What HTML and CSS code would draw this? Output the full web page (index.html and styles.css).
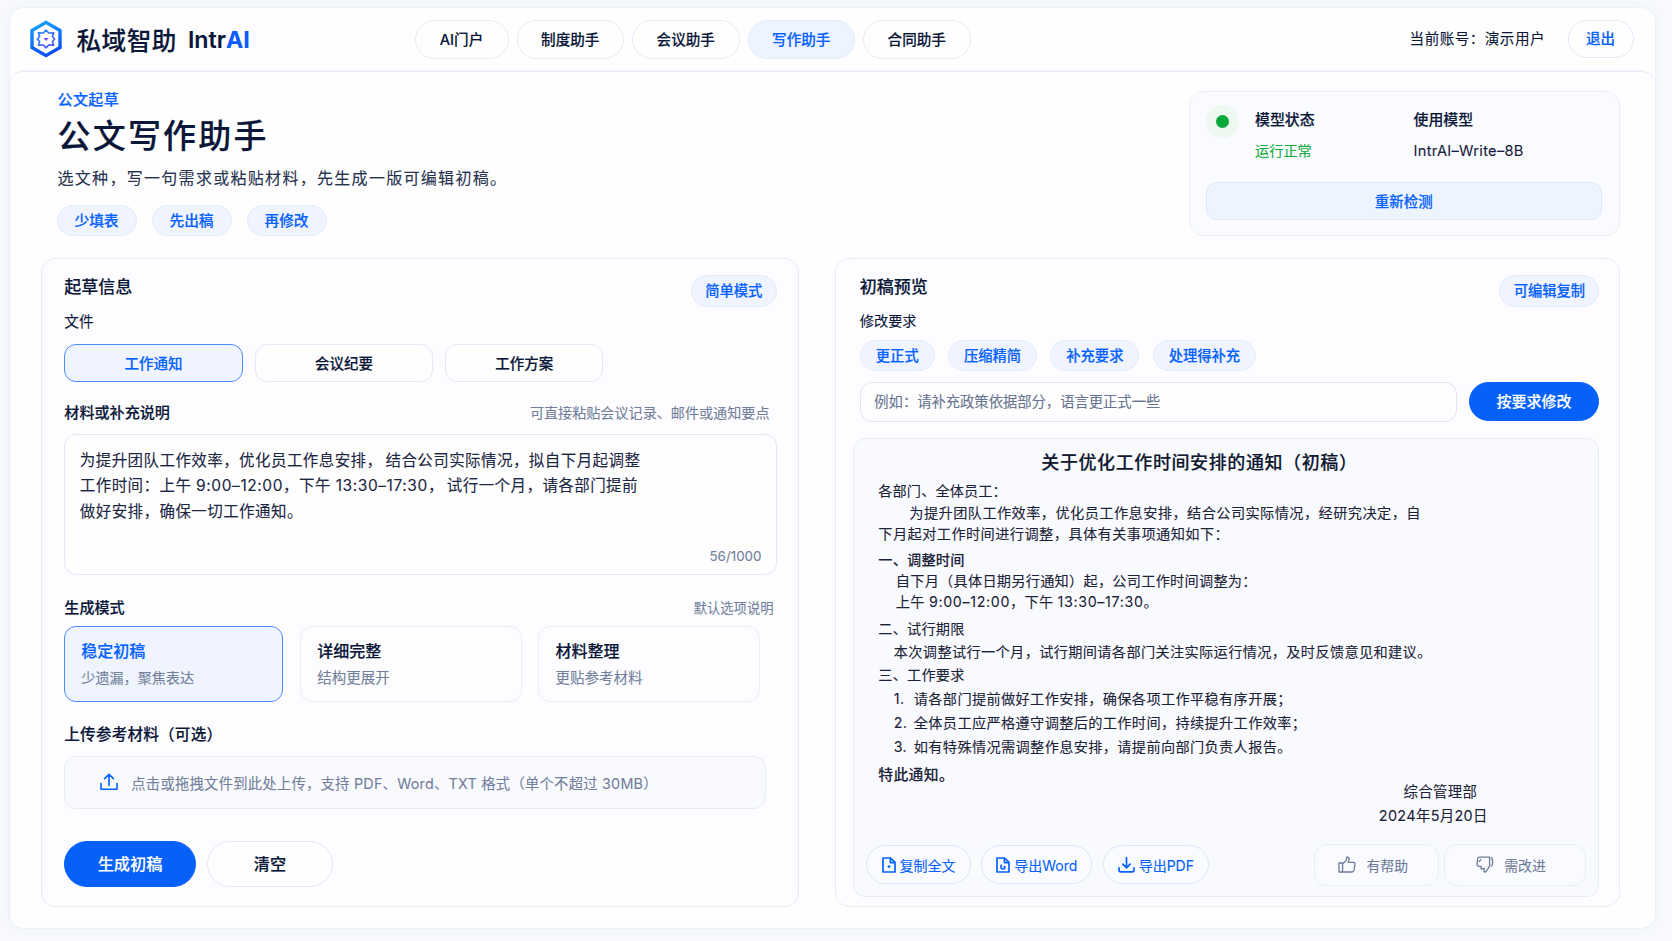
FILE: index.html
```html
<!DOCTYPE html>
<html lang="zh-CN">
<head>
<meta charset="utf-8">
<title>公文写作助手 - 私域智助 IntrAI</title>
<link rel="stylesheet" href="styles.css">
</head>
<body>
<div class="frame">
  <header class="topbar">
    <div class="brand">
      <svg class="brand-logo" viewBox="0 0 34 38">
        <defs>
          <linearGradient id="hex" x1="0" y1="0" x2="0.3" y2="1"><stop offset="0" stop-color="#12a5ff"/><stop offset="1" stop-color="#0a50f5"/></linearGradient>
          <linearGradient id="star" x1="0" y1="0" x2="1" y2="1"><stop offset="0" stop-color="#1f8bff"/><stop offset="1" stop-color="#5a4df0"/></linearGradient>
        </defs>
        <path d="M17 2.4 31 10.5V27.5L17 35.6 3 27.5V10.5Z" fill="#fff" stroke="url(#hex)" stroke-width="3.4"/>
        <path d="M17 10.2 19.7 13 24.6 12.8 23.4 16.5 25.6 19 23.4 21.5 24.6 25.2 19.7 25 17 27.8 14.3 25 9.4 25.2 10.6 21.5 8.4 19 10.6 16.5 9.4 12.8 14.3 13Z" fill="none" stroke="url(#star)" stroke-width="1.7" stroke-linejoin="round"/>
        <path d="M14.4 18h5.2L17 21Z" fill="#7a4df2" stroke="none"/>
      </svg>
      <span class="brand-cn">私域智助</span>
      <span class="brand-en">Intr<b>AI</b></span>
    </div>
    <nav class="nav">
      <a class="nav-item nav-first">AI门户</a>
      <a class="nav-item">制度助手</a>
      <a class="nav-item">会议助手</a>
      <a class="nav-item active">写作助手</a>
      <a class="nav-item">合同助手</a>
    </nav>
    <div class="account">
      <span class="account-name">当前账号：演示用户</span>
      <button class="logout">退出</button>
    </div>
  </header>

  <main class="page">
    <section class="hero">
      <div class="intro">
        <div class="eyebrow">公文起草</div>
        <h1>公文写作助手</h1>
        <p class="lead">选文种，写一句需求或粘贴材料，先生成一版可编辑初稿。</p>
        <div class="intro-chips"><span class="chip">少填表</span><span class="chip">先出稿</span><span class="chip">再修改</span></div>
      </div>
      <aside class="status">
        <div class="status-row">
          <span class="halo"><i></i></span>
          <div class="status-col"><strong>模型状态</strong><span class="ok">运行正常</span></div>
          <div class="status-col"><strong>使用模型</strong><span class="model">IntrAI–Write–8B</span></div>
        </div>
        <button class="recheck">重新检测</button>
      </aside>
    </section>

    <section class="panels">
      <div class="panel draft">
        <div class="panel-head"><h2>起草信息</h2><span class="chip tag">简单模式</span></div>
        <div class="label label-file">文件</div>
        <div class="types">
          <button class="type on">工作通知</button>
          <button class="type">会议纪要</button>
          <button class="type narrow">工作方案</button>
        </div>
        <div class="label-row material-row"><span class="label strong">材料或补充说明</span><span class="hint">可直接粘贴会议记录、邮件或通知要点</span></div>
        <div class="textarea">
          <p>为提升团队工作效率，优化员工作息安排，<span class="thin"></span>结合公司实际情况，拟自下月起调整<br>工作时间：上午 <span class="time">9:00–12:00</span>，下午 <span class="time">13:30–17:30</span>，<span class="thin"></span>试行一个月，请各部门提前<br>做好安排，确保一切工作通知。</p>
          <span class="counter">56/1000</span>
        </div>
        <div class="label-row mode-row"><span class="label strong">生成模式</span><span class="hint small">默认选项说明</span></div>
        <div class="modes">
          <div class="mode on"><strong>稳定初稿</strong><span class="tight">少遗漏，聚焦表达</span></div>
          <div class="mode"><strong>详细完整</strong><span>结构更展开</span></div>
          <div class="mode"><strong>材料整理</strong><span>更贴参考材料</span></div>
        </div>
        <div class="label label-upload">上传参考材料（可选）</div>
        <div class="upload">
          <svg class="upload-icon" viewBox="0 0 18 18"><path d="M1 10.5V16.2H17V10.5M9 12.5V1.5M4.6 5.6 9 1.3 13.4 5.6"/></svg>
          <span>点击或拖拽文件到此处上传，支持 PDF、Word、TXT 格式（单个不超过 30MB）</span>
        </div>
        <div class="actions"><button class="primary generate">生成初稿</button><button class="clear">清空</button></div>
      </div>

      <div class="panel preview">
        <div class="panel-head"><h2>初稿预览</h2><span class="chip tag">可编辑复制</span></div>
        <div class="label label-revise">修改要求</div>
        <div class="revise-chips"><span class="chip">更正式</span><span class="chip">压缩精简</span><span class="chip">补充要求</span><span class="chip">处理得补充</span></div>
        <div class="revise-row">
          <div class="input">例如：请补充政策依据部分，语言更正式一些</div>
          <button class="primary revise">按要求修改</button>
        </div>
        <article class="doc">
          <h3>关于优化工作时间安排的通知（初稿）</h3>
          <p class="salute">各部门、全体员工：</p>
          <p class="para">为提升团队工作效率，优化员工作息安排，结合公司实际情况，经研究决定，自<br>下月起对工作时间进行调整，具体有关事项通知如下：</p>
          <h4>一、调整时间</h4>
          <p class="times">自下月（具体日期另行通知）起，公司工作时间调整为：<br>上午 <span class="time">9:00–12:00</span>，下午 <span class="time">13:30–17:30</span>。</p>
          <h4 class="light">二、试行期限</h4>
          <p class="trial">本次调整试行一个月，试行期间请各部门关注实际运行情况，及时反馈意见和建议。</p>
          <h4 class="light third">三、工作要求</h4>
          <ol class="reqs">
            <li><i>1.</i>请各部门提前做好工作安排，确保各项工作平稳有序开展；</li>
            <li><i>2.</i>全体员工应严格遵守调整后的工作时间，持续提升工作效率；</li>
            <li><i>3.</i>如有特殊情况需调整作息安排，请提前向部门负责人报告。</li>
          </ol>
          <div class="closing">
            <p class="end">特此通知。</p>
            <div class="sign"><span class="dept">综合管理部</span><span>2024年5月20日</span></div>
          </div>
          <footer class="doc-foot">
            <button class="export copy"><svg viewBox="0 0 14 16"><path d="M1 1H8.6L13 5.4V15H1ZM8.4 1.2V5.6H12.8"/><circle cx="7" cy="9.6" r="1.4"/></svg>复制全文</button>
            <button class="export word"><svg viewBox="0 0 14 16"><path d="M1 1H8.6L13 5.4V15H1ZM8.4 1.2V5.6H12.8M5.4 8.2C4 10.5 5.6 12 7.2 12S9.6 10 8.2 9.6"/></svg>导出Word</button>
            <button class="export pdf"><svg class="wide" viewBox="0 0 17 16"><path d="M8.5 .8V10.6M4.9 7.2 8.5 10.8 12.1 7.2M1 10.8V13Q1 14.8 2.8 14.8H14.2Q16 14.8 16 13V10.8"/></svg>导出PDF</button>
            <button class="vote up"><svg viewBox="0 0 18 17"><path d="M1 7H4.6V16H1ZM4.6 8 8.2 4.4 8.7 1.6Q9.2 .6 10.3 1.2 11.5 2 11 3.8L10.3 6.4H15.6Q17.2 6.6 17 8.2L15.9 14.4Q15.5 16 14 16H4.6"/></svg>有帮助</button>
            <button class="vote down"><svg viewBox="0 0 18 17"><path d="M13.6 1.2H3.2Q1.9 1.2 1.7 2.6L1 8.6Q1 10.2 2.6 10.3H5.2V13.2M13.6 1.2V10.4L9.6 15.8Q8.2 16.4 7.9 15L8.2 12.4 5.2 12.8M3.2 5.5 5 3.6M15.6 1.6Q17.6 5.6 15.8 10.2"/></svg>需改进</button>
          </footer>
        </article>
      </div>
    </section>
  </main>
</div>
</body>
</html>
```
FILE: styles.css
```css
* { box-sizing: border-box; }
body {
  margin: 0;
  width: 1672px;
  height: 941px;
  overflow: hidden;
  padding: 7px 16px 12px 9px;
  background: #f7f9fd;
  color: #0b1738;
  font-family: Inter, "Noto Sans CJK SC", sans-serif;
  font-size: 14.5px;
  text-spacing-trim: space-all;
  -webkit-text-stroke: .1px currentColor;
}
h1, h2, h3, h4, p, ol { margin: 0; padding: 0; font-weight: 500; }
button { font: inherit; color: inherit; padding: 0; margin: 0; background: #fefeff; border: 1px solid #e3e9f7; }
svg { fill: none; stroke: currentColor; stroke-linejoin: round; stroke-linecap: round; flex: none; }
strong, b { font-weight: 500; }
h1, h2, h3, strong, .brand-cn, .nav-item, .chip, .type, .logout, .primary, .clear, .recheck, .eyebrow, .label.strong, .label-upload {
  -webkit-text-stroke: .16px currentColor;
}

.frame {
  height: 922px;
  border: 1px solid #edf1f9;
  border-radius: 14px;
  background: #fefeff;
  box-shadow: 0 0 8px rgba(60, 90, 170, .04);
}

/* top bar */
.topbar { height: 63px; display: flex; align-items: center; position: relative; padding-left: 19px; }
.brand { display: flex; align-items: center; width: 386px; padding-bottom: 1px; }
.brand-logo { width: 34px; height: 38px; stroke-linejoin: miter; }
.brand-cn { margin-left: 13.5px; padding-bottom: 1px; font-size: 24.6px; letter-spacing: .5px; font-weight: 500; }
.brand-en { margin-left: 11px; padding-top: 1px; font-size: 23.2px; font-weight: 600; }
.brand-en b { color: #0a5cff; font-weight: 700; }
.nav { display: flex; gap: 8px; margin-left: -.5px; }
.nav-item {
  width: 107.5px; height: 39px; line-height: 38px; text-align: center;
  border: 1px solid #e6ebf7; border-radius: 20px; font-weight: 500; font-size: 14.6px;
}
.nav-first { width: 94px; }
.nav-item.active { color: #0561ff; background: #edf3ff; border-color: #e2ebfd; }
.account { margin-left: auto; display: flex; align-items: center; padding: 0 21.5px 1.5px 0; }
.account-name { font-size: 14.6px; letter-spacing: .45px; padding-bottom: 2px; }
.logout { width: 66px; height: 38px; border-radius: 19px; margin-left: 22.5px; padding-bottom: 2px; color: #0561ff; font-weight: 500; }

/* page */
.page {
  height: 857px;
  border-top: 1px solid #e6ebf6;
  border-radius: 14px;
  box-shadow: 0 -1px 3px rgba(60, 90, 170, .05);
  padding: 18.5px 35px 0 31px;
}
.hero { display: flex; justify-content: space-between; height: 167px; }
.intro { padding-left: 16.5px; }
.eyebrow { line-height: 18px; color: #0561ff; font-size: 15px; letter-spacing: .4px; font-weight: 500; }
h1 { font-size: 33px; letter-spacing: 2.2px; line-height: 44px; margin-top: 5px; }
.lead { font-size: 16px; letter-spacing: 1.3px; line-height: 22px; margin-top: 9.5px; color: #27324f; font-weight: 400; }
.intro-chips { display: flex; gap: 15px; margin: 15.5px 0 0 -.5px; }
.chip {
  display: block; height: 31px; line-height: 29px; padding: 0 16.5px; border-radius: 16px;
  background: #eff4fe; border: 1px solid #e3ebfc; color: #0561ff; font-weight: 500; font-size: 14.3px;
}
.intro-chips .chip { width: 80px; padding: 0 1px 0 0; text-align: center; font-size: 14.7px; line-height: 30px; }

.status { width: 431.5px; height: 145px; border: 1px solid #e9eef8; border-radius: 14px; background: #fafbfe; padding: 13px 17px 0 16px; }
.status-row { display: flex; height: 77.5px; }
.halo { width: 33px; height: 33px; border-radius: 50%; background: #edf8f1; display: grid; place-items: center; }
.halo i { width: 13px; height: 13px; border-radius: 50%; background: #08a83a; }
.status-col { display: flex; flex-direction: column; gap: 11px; line-height: 20px; padding-top: 5px; width: 158.5px; margin-left: 16.5px; }
.status-col + .status-col { margin-left: 0; }
.status-col strong { font-size: 14.9px; }
.ok { color: #0cab3c; font-size: 14.2px; }
.model { color: #16203d; font-size: 14.6px; letter-spacing: .3px; white-space: nowrap; }
.recheck { width: 396.5px; height: 38px; padding-bottom: 2px; border-radius: 11px; background: #eef4fe; border-color: #dbe7fd; color: #0561ff; font-weight: 500; }

.panels { display: flex; gap: 36.8px; }
.panel { border: 1px solid #e6ebf6; border-radius: 14px; background: #fdfdff; height: 649px; flex: none; }
.draft { width: 757.5px; padding: 16px 21px 0 22.3px; }
.preview { width: 785px; padding: 16px 20px 0 23.5px; }
.panel-head { display: flex; justify-content: space-between; height: 32px; }
h2 { font-size: 17px; line-height: 24px; }
.tag { height: 32px; line-height: 30px; padding: 0 13.2px; }

.label { line-height: 20px; font-size: 14.7px; font-weight: 500; }
.label.strong { font-size: 15.1px; }
.label-file { margin-top: 5px; font-weight: 400; }
.types { display: flex; gap: 12.2px; margin-top: 12px; }
.type { width: 178.3px; height: 38.5px; border-radius: 12px; font-weight: 500; }
.type.narrow { width: 158px; }
.on { background: #eff4fe; border-color: #4a8dfb; color: #0561ff; }
.label-row { display: flex; justify-content: space-between; line-height: 20px; }
.material-row { margin-top: 21px; padding-right: 7px; }
.mode-row { margin-top: 22.5px; padding-right: 3px; }
.hint { color: #727f9c; font-size: 14.1px; }
.hint.small { font-size: 13.3px; }
.textarea {
  margin-top: 10.5px; height: 141.5px; border: 1px solid #e2e8f5; border-radius: 12px; background: #fefeff;
  padding: 13px 14px 8px 14.5px; display: flex; flex-direction: column; justify-content: space-between;
}
.textarea p { font-size: 15.5px; letter-spacing: .43px; line-height: 25.6px; color: #1b2642; font-weight: 400; white-space: nowrap; }
.textarea .time { letter-spacing: .58px; }
.thin { display: inline-block; width: 3px; }
.counter { align-self: flex-end; color: #727f9c; line-height: 20px; font-size: 13.4px; }
.modes { display: flex; gap: 16px; margin-top: 8.5px; }
.mode { width: 222.3px; height: 75.5px; border: 1px solid #e8edf7; border-radius: 12px; padding: 13px 0 0 16.5px; display: flex; flex-direction: column; gap: 5px; line-height: 22px; }
.mode.on { width: 219px; border-color: #4a8dfb; padding-left: 16px; margin-right: .5px; }
.mode strong { font-size: 16px; }
.mode span { color: #727f9c; font-size: 14.5px; }
.mode .tight { font-size: 14.1px; }
.label-upload { margin-top: 23.5px; font-size: 15.6px; letter-spacing: .2px; }
.upload { width: 702px; height: 53px; margin-top: 10.5px; border: 1px solid #e5ebf7; border-radius: 12px; background: #f9fafd; display: flex; align-items: center; padding-left: 34.5px; color: #727f9c; white-space: nowrap; font-size: 14.3px; letter-spacing: .26px; }
.upload-icon { width: 18px; height: 18px; color: #0561ff; stroke-width: 1.6; margin-right: 13.5px; }
.actions { display: flex; gap: 11px; margin-top: 32.5px; }
.primary { background: #0561fa; border-color: #0561fa; color: #fff; font-weight: 500; }
.generate { width: 131.5px; height: 45.5px; border-radius: 23px; font-size: 16.2px; padding-bottom: 1px; }
.clear { width: 126.5px; height: 45.5px; border-radius: 23px; font-size: 16.2px; font-weight: 500; padding-bottom: 1px; }

.label-revise { margin-top: 4px; font-size: 14.2px; font-weight: 400; }
.revise-chips { display: flex; gap: 13.2px; margin-top: 9px; }
.revise-chips .chip { padding: 0 15px; }
.revise-row { display: flex; gap: 12px; margin-top: 11px; }
.input { width: 597.5px; height: 40px; line-height: 38px; border: 1px solid #dfe6f4; border-radius: 12px; background: #fefeff; padding-left: 13.5px; color: #68748f; font-size: 14.3px; flex: none; }
.revise { width: 129.5px; height: 39px; border-radius: 20px; font-size: 15px; flex: none; padding-bottom: 1px; }

/* document */
.doc { margin: 16px 0 0 -7px; width: 746px; height: 459px; border: 1px solid #e6ecf8; border-radius: 12px; background: #f9fafd; padding: 11px 12px 0 24.5px; color: #1a2238; font-size: 14.2px; letter-spacing: .35px; white-space: nowrap; }
.doc p { font-weight: 400; }
h3 { font-size: 18px; letter-spacing: .6px; line-height: 26px; padding-left: 163px; color: #0f1830; }
.salute { margin-top: 4px; line-height: 22px; letter-spacing: .1px; }
.para { line-height: 21px; text-indent: 31px; letter-spacing: .43px; }
h4 { margin-top: 5px; line-height: 21px; font-size: 14.2px; letter-spacing: .2px; }
h4.light { font-weight: 400; }
h4.third { margin-top: 2.5px; }
.times { line-height: 21.6px; padding-left: 17.5px; letter-spacing: .25px; }
.times .time { letter-spacing: .68px; }
.trial { line-height: 21px; margin-top: 2px; padding-left: 15.5px; }
.reqs { list-style: none; margin-top: 1.5px; padding-left: 15.5px; line-height: 23.9px; font-weight: 400; }
.reqs i { font-style: normal; display: inline-block; width: 20px; }
.closing { display: flex; justify-content: space-between; height: 74px; margin-top: 6px; line-height: 22px; padding-right: 98px; }
.doc .end { font-size: 14.8px; font-weight: 500; }
.sign { display: flex; flex-direction: column; align-items: center; padding-top: 16px; line-height: 23.5px; font-size: 14.4px; }
.dept { padding-left: 14px; }
.doc-foot { display: flex; align-items: center; margin-left: -12px; height: 41px; margin-top: 6px; letter-spacing: 0; }
.export { height: 39px; border-radius: 20px; background: #fafbff; border-color: #dce7fb; color: #0561ff; display: flex; align-items: center; justify-content: center; gap: 4px; font-size: 14px; margin-right: 10.5px; }
.export svg { width: 14px; height: 16px; stroke-width: 1.7; }
.export svg.wide { width: 17px; height: 16px; }
.copy { width: 104.5px; }
.word { width: 111px; }
.pdf { width: 106px; }
.export circle { fill: currentColor; stroke: none; }
.vote { height: 41.5px; border-radius: 13px; background: #fafbff; border-color: #e8eef9; color: #6d7a98; display: flex; align-items: center; justify-content: center; gap: 10.5px; font-size: 13.9px; }
.vote svg { width: 18px; height: 17px; stroke-width: 1.3; }
.up { width: 125.5px; margin-left: auto; margin-right: 4.5px; padding-right: 7px; }
.down { width: 142px; padding-right: 8px; }
```
